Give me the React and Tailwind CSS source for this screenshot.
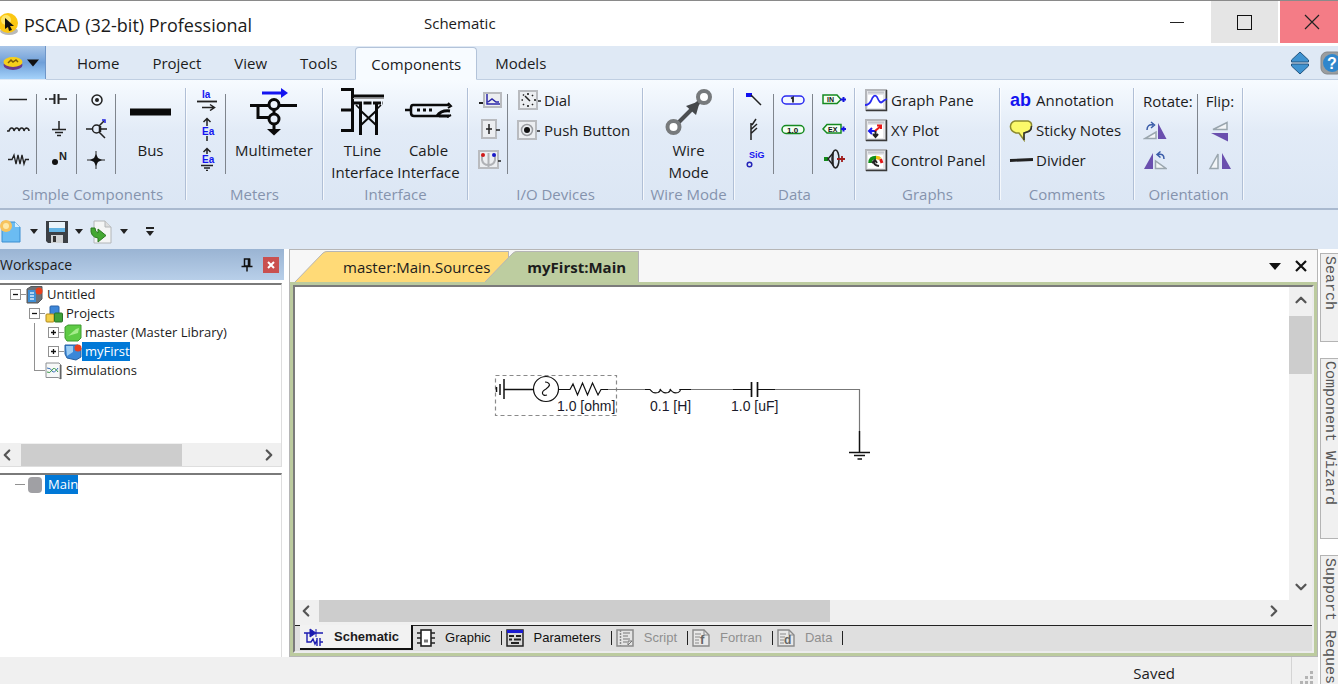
import { ChevronDown, ChevronLeft, ChevronRight, ChevronUp } from "lucide-react";

const menuTabs = ["Home", "Project", "View", "Tools", "Components", "Models"];

const sheets = [
  { label: "Graphic", icon: GraphicIcon },
  { label: "Parameters", icon: ParametersIcon },
  { label: "Script", icon: ScriptIcon, disabled: true },
  { label: "Fortran", icon: FortranIcon, disabled: true },
  { label: "Data", icon: DataIcon, disabled: true },
];

/* ---------- Small ribbon icons (24 x 24) ---------- */

function Icon({ children, className = "h-6 w-6", box = "0 0 24 24" }) {
  return (
    <svg
      viewBox={box}
      className={`shrink-0 ${className}`}
      fill="none"
      stroke="#222"
      strokeWidth="1.5"
      aria-hidden="true"
    >
      {children}
    </svg>
  );
}

function Glyph({ x, y, size = 9, fill = "#1414f0", children }) {
  return (
    <text
      x={x}
      y={y}
      fontSize={size}
      fill={fill}
      stroke="none"
      fontWeight="bold"
      fontFamily="'Liberation Sans', Arial, sans-serif"
    >
      {children}
    </text>
  );
}

const WireIcon = () => (
  <Icon><path d="M3 12.5H21" /></Icon>
);
const InductorIcon = () => (
  <Icon><path d="M1 14H3Q4 10.500 6 11Q8 11.500 8 14Q9 10.500 11 11Q13 11.500 13 14Q14 10.500 16 11Q18 11.500 18 14Q19 11 20.500 11Q23 11.500 23 14" /></Icon>
);
const ResistorIcon = () => (
  <Icon><path d="M2 12.500H6L8 8L10 17L12 8L14 17L16 8L18 17L19.500 12.500H23" strokeWidth="1.300" /></Icon>
);
const CapacitorIcon = () => (
  <Icon><path d="M0 12H2M4 12H9M14 12H22" /><path d="M9.500 7V17M13.500 7V17" strokeWidth="2" /></Icon>
);
const GroundIcon = () => (
  <Icon><path d="M14 4V12M7 12.500H21M10 15.500H18M12 18.500H16" /></Icon>
);
const NodeIcon = () => (
  <Icon><circle cx="10" cy="15" r="3" fill="#111" stroke="none" /><Glyph x="14" y="13" size="11" fill="#222">N</Glyph></Icon>
);
const TerminalIcon = () => (
  <Icon><circle cx="13" cy="13" r="5" /><circle cx="13" cy="13" r="2" fill="#222" stroke="none" /></Icon>
);
const BranchIcon = () => (
  <Icon>
    <path d="M2 12H8M15 9L20 4M15 12H23M15 15L21 21" />
    <circle cx="12.500" cy="12" r="4" />
    <path d="M16 9V15" strokeWidth="2.500" />
    <path d="M18 3H21V6" stroke="#2222dd" />
  </Icon>
);
const StarIcon = () => (
  <Icon><path d="M3 13H21M12 4V22" strokeWidth="1" /><path d="M12 7L14 11L18 13L14 15L12 19L10 15L6 13L10 11Z" fill="#111" stroke="none" /></Icon>
);

const AmmeterIcon = () => (
  <Icon><Glyph x="8" y="11" size="10">Ia</Glyph><path d="M3 14.500H23" strokeWidth="1.800" /><path d="M8 20.500H20M16 17.500L20.500 20.500L16 23.500" /></Icon>
);
const VoltmeterIcon = () => (
  <Icon><path d="M13 9V2M9.500 5L13 1.500L16.500 5M13 19V24" /><Glyph x="8" y="18" size="10">Ea</Glyph></Icon>
);
const VoltmeterGndIcon = () => (
  <Icon><path d="M13 7V2M9.500 5L13 1.500L16.500 5M7 18.500H19M10 21H16M12 23.500H14" /><Glyph x="8" y="16" size="10">Ea</Glyph></Icon>
);

const Tile = ({ x = 3, y = 3, w = 18, h = 18 }) => (
  <rect x={x} y={y} width={w} height={h} fill="#eceef1" stroke="#b9bbbf" strokeWidth="2" />
);

const OutputChannelIcon = () => (
  <Icon>
    <Tile x="6" y="6" w="17" h="14" />
    <path d="M1 16H5" strokeWidth="2" />
    <path d="M9 7V17H22M10 15L14 12L18 15H21" stroke="#2a26a8" />
  </Icon>
);
const SliderIcon = () => (
  <Icon><Tile x="4" y="3" w="14" h="18" /><path d="M11 7V17M8 12H14M18 13H22" /></Icon>
);
const SwitchIcon = () => (
  <Icon>
    <Tile x="1" y="4" w="19" h="17" />
    <path d="M4 8V13Q5 18 10.500 18Q16 18 17 13V8M10.500 6V20" stroke="#b0b2b6" strokeWidth="2" />
    <circle cx="5" cy="8" r="2" fill="#d01818" stroke="none" />
    <circle cx="16" cy="8" r="2" fill="#1818c8" stroke="none" />
    <path d="M20 14H23" />
  </Icon>
);
const DialIcon = () => (
  <Icon>
    <Tile x="2" y="3" />
    <path d="M8 8L13 13" />
    <path d="M11 5V7M16 7L15 8M18 11V13M16 17L15 16M11 17V19M6 17L7 16M4.500 12H6M6 6.500L7 7.500" strokeWidth="1.600" />
    <path d="M21 13H24" />
  </Icon>
);
const PushButtonIcon = () => (
  <Icon>
    <Tile x="1" y="3" />
    <circle cx="10" cy="12" r="5.500" stroke="#9a9ca0" />
    <circle cx="10" cy="12" r="3" fill="#111" stroke="none" />
    <path d="M20 13H23" />
  </Icon>
);

const DataLabelIcon = () => (
  <Icon><rect x="4" y="6" width="6" height="4" fill="#1010f0" stroke="none" /><path d="M9 8L19 18" /></Icon>
);
const TapIcon = () => (
  <Icon><path d="M9 6V23M10 8L14 2M9.500 12L15 7M9.500 16L15 11" /></Icon>
);
const SignalIcon = () => (
  <Icon><Glyph x="7" y="11" size="9">SiG</Glyph><circle cx="7.500" cy="17.500" r="2.300" stroke="#2424b8" /></Icon>
);
const IntegerIcon = () => (
  <Icon><rect x="1" y="9" width="22" height="8" rx="4" stroke="#2a2af0" fill="#f4f8ff" /><path d="M10 11.500L12 10.500V15.500" strokeWidth="1.800" /></Icon>
);
const RealIcon = () => (
  <Icon><rect x="1" y="8.500" width="22" height="8" rx="4" stroke="#158a20" fill="#f4fff4" /><Glyph x="6" y="15.500" size="8" fill="#111">1.0</Glyph></Icon>
);
const ImportTagIcon = () => (
  <Icon>
    <path d="M1 8H15L19 12.500L15 16.500H1Z" stroke="#158a20" fill="#f4fff4" />
    <Glyph x="5" y="15" size="7" fill="#111">IN</Glyph>
    <path d="M18 12.500H24M21.500 10V15" stroke="#1414e0" strokeWidth="2" />
  </Icon>
);
const ExportTagIcon = () => (
  <Icon>
    <path d="M5 7.500H19V16H5L1 12Z" stroke="#158a20" fill="#f4fff4" />
    <Glyph x="6" y="14.500" size="7" fill="#111">EX</Glyph>
    <path d="M19 12H24M21.500 9.500V14.500" stroke="#1414e0" strokeWidth="2" />
  </Icon>
);
const RadioLinkIcon = () => (
  <Icon>
    <path d="M2 12H6" stroke="#118a18" strokeWidth="4" />
    <path d="M6 12L11 6V18Z" />
    <ellipse cx="13.500" cy="12" rx="3.500" ry="9" />
    <path d="M15 12H23M20 9V15" stroke="#a01c1c" strokeWidth="1.800" />
  </Icon>
);

const PaneFrame = ({ children }) => (
  <Icon>
    <rect x="2" y="2" width="20" height="20" fill="#e6e7ea" stroke="#b4b6ba" strokeWidth="2" />
    <rect x="4" y="7" width="15" height="13" fill="#fff" stroke="none" />
    <path d="M22.500 2V22.500H2" stroke="#3a3a3a" />
    <path d="M4 4.500H20" stroke="#c4c6cc" strokeWidth="2" />
    {children}
  </Icon>
);
const GraphPaneIcon = () => (
  <PaneFrame><path d="M1 17Q5 17 7 13Q10 5 13 9Q16 16 18 14Q20 12 23 11" stroke="#2a2af0" strokeWidth="1.800" /></PaneFrame>
);
const XYPlotIcon = () => (
  <PaneFrame>
    <path d="M5 13H11M8 10L5 13L8 16" stroke="#1a1af0" strokeWidth="2" />
    <path d="M11 13L17 8M13 7.500H17V11" stroke="#e81818" strokeWidth="2" />
    <path d="M11.500 13V19M9 16L11.500 19L14 16" strokeWidth="2" />
  </PaneFrame>
);
const ControlPanelIcon = () => (
  <PaneFrame>
    <path d="M6 15Q6 9.500 12 9.500" stroke="#109018" strokeWidth="3.500" />
    <path d="M12 9.500Q15 9.500 16 11" stroke="#f0c010" strokeWidth="3.500" />
    <path d="M16.500 11L18 15" stroke="#e01818" strokeWidth="3" />
    <path d="M15 18Q9 17 10 13M8 15L11 12L13 15" strokeWidth="2" />
  </PaneFrame>
);

const AnnotationIcon = () => (
  <Icon><Glyph x="1" y="18" size="18">ab</Glyph></Icon>
);
const StickyIcon = () => (
  <Icon>
    <path d="M6 3H19Q23 4 22.500 8Q22.500 13 18 14L15 15V22L10 15H7Q1 13 1.500 8Q2 4 6 3Z" fill="#fbf96a" stroke="#8c8a30" />
    <path d="M22.500 8Q22.500 13 18 14L15 15V22" stroke="#333" />
  </Icon>
);
const DividerIcon = () => (
  <Icon><path d="M1 12.500L24 11.500" strokeWidth="2.800" /></Icon>
);

const PURPLE = "#6a4fae";
const RotateRightIcon = () => (
  <Icon>
    <path d="M15 4V20H23.500Z" fill={PURPLE} stroke="none" />
    <path d="M2 19.500H13V13Z" fill="#f2f5f7" stroke="#9aa6ae" />
    <path d="M4 11Q4 5 10 6M8 3L11.500 6L8 9" stroke="#3a5ca8" />
  </Icon>
);
const RotateLeftIcon = () => (
  <Icon>
    <path d="M10 4V20H1Z" fill={PURPLE} stroke="none" />
    <path d="M12.500 12V19.500H23Z" fill="#f2f5f7" stroke="#9aa6ae" />
    <path d="M21 10Q21 4 15 5.500M17.500 2.500L14 5.500L17.500 8.500" stroke="#3a5ca8" />
  </Icon>
);
const FlipVerticalIcon = () => (
  <Icon>
    <path d="M19 3.500V10.500H5Z" fill="#f2f5f7" stroke="#9aa6ae" />
    <path d="M3 14H20V22.500Z" fill={PURPLE} stroke="none" />
  </Icon>
);
const FlipHorizontalIcon = () => (
  <Icon>
    <path d="M10 5V19.500H2Z" fill="#f2f5f7" stroke="#9aa6ae" />
    <path d="M14 4V20H23Z" fill={PURPLE} stroke="none" />
  </Icon>
);

/* ---------- Large ribbon icons (48 x 48) ---------- */

function BigIcon({ children }) {
  return (
    <svg viewBox="0 0 48 48" className="mt-1 mb-[3px] h-12 w-12 shrink-0" fill="none" stroke="#0a0a0a" strokeWidth="3" aria-hidden="true">
      {children}
    </svg>
  );
}

const BusIcon = () => (
  <BigIcon><path d="M3 24H44" strokeWidth="7" /></BigIcon>
);
const MultimeterIcon = () => (
  <BigIcon>
    <path d="M12 5H33" stroke="#1414f0" />
    <path d="M31 0L38 5L31 10Z" fill="#1414f0" stroke="none" />
    <path d="M0 17.500H47M8 17V29.500H19" />
    <path d="M24 22V43" />
    <circle cx="24" cy="16.500" r="5" fill="#eef4fc" />
    <circle cx="24" cy="31" r="5" fill="#e6eef9" />
    <path d="M17 41H31L24 47.500Z" fill="#0a0a0a" stroke="none" />
  </BigIcon>
);
const TLineIcon = () => (
  <BigIcon>
    <path d="M2 1.500H13.500V42.500H2M2 22H13M13 8H45" />
    <path d="M15 15H44" strokeDasharray="8 1.500" />
    <path d="M21.500 15V47M37.500 15V47" />
    <path d="M22 23L37 37M37 23L22 37" strokeWidth="2" />
    <path d="M17 17L21 21M42 17L38 21" strokeWidth="1.600" />
    <path d="M14 10.500H45" stroke="#999" strokeWidth="1" />
  </BigIcon>
);
const CableIcon = () => (
  <BigIcon>
    <path d="M0 22H6M44 17H8Q6 17 6 20V25Q6 28 9 28H34" strokeWidth="2.500" />
    <path d="M32 28Q36 22 45 23M34 28H44" strokeWidth="3" />
    <path d="M12 22H15M18 22H21M24 22H27" />
    <path d="M43 15L46 18L43 20M42 29L46 27" strokeWidth="2" />
  </BigIcon>
);
const WireModeIcon = () => (
  <BigIcon>
    <path d="M13 35L35 13" stroke="#4c4f52" strokeWidth="4" />
    <path d="M35 13L21 18L31 27Z" fill="#45484b" stroke="none" />
    <circle cx="8.500" cy="39" r="6" fill="#fff" stroke="#777a7c" strokeWidth="4" />
    <circle cx="39" cy="9" r="6" fill="#fff" stroke="#777a7c" strokeWidth="4" />
  </BigIcon>
);

/* ---------- Ribbon building blocks ---------- */

function Group({ label, className, children }) {
  return (
    <section className={`flex shrink-0 flex-col pt-1 ${className}`} aria-label={label}>
      <div className="flex h-[100px]">{children}</div>
      <div className="whitespace-nowrap text-center leading-5 text-[#8593ad]">{label}</div>
    </section>
  );
}

const GroupEdge = () => <div className="my-2 w-0.5 shrink-0 border-l border-[#b0bfd6] bg-white/70" />;
const Rule = () => <div className="mt-[10px] h-20 w-px shrink-0 bg-[#7f858d]" />;

function IconColumn({ icons, className }) {
  return (
    <div className={`flex shrink-0 flex-col items-center ${className}`}>
      {icons.map(([name, Glyphic]) => (
        <button key={name} type="button" aria-label={name} className="flex h-[30px] items-center">
          <Glyphic />
        </button>
      ))}
    </div>
  );
}

function TextColumn({ items, className }) {
  return (
    <div className={`flex flex-col items-start ${className}`}>
      {items.map(([label, Glyphic]) => (
        <button key={label} type="button" className="flex h-[30px] items-center gap-[3px] whitespace-nowrap pt-0.5">
          <Glyphic />
          {label}
        </button>
      ))}
    </div>
  );
}

function BigButton({ icon: Glyphic, lines, className }) {
  return (
    <button type="button" className={`flex flex-col items-center justify-start leading-[22px] ${className}`}>
      <Glyphic />
      {lines.map((line) => (
        <span key={line} className="whitespace-nowrap">{line}</span>
      ))}
    </button>
  );
}

function Ribbon() {
  return (
    <div className="flex h-[130px] overflow-hidden border-b-2 border-[#a9b9cf] bg-gradient-to-b from-[#f7fbff] via-[#e2ebf7] via-40% to-[#dbe6f4]">
      <Group label="Simple Components" className="w-[185px]">
        <IconColumn className="w-9" icons={[["Wire", WireIcon], ["Inductor", InductorIcon], ["Resistor", ResistorIcon]]} />
        <Rule />
        <IconColumn className="w-[39px]" icons={[["Capacitor", CapacitorIcon], ["Ground", GroundIcon], ["Node label", NodeIcon]]} />
        <Rule />
        <IconColumn className="w-[38px]" icons={[["Terminal", TerminalIcon], ["Breakout", BranchIcon], ["Pin", StarIcon]]} />
        <Rule />
        <BigButton className="flex-1" icon={BusIcon} lines={["Bus"]} />
      </Group>
      <GroupEdge />
      <Group label="Meters" className="w-[135px]">
        <IconColumn className="w-[38px]" icons={[["Ammeter", AmmeterIcon], ["Voltmeter", VoltmeterIcon], ["Ground voltmeter", VoltmeterGndIcon]]} />
        <Rule />
        <BigButton className="flex-1" icon={MultimeterIcon} lines={["Multimeter"]} />
      </Group>
      <GroupEdge />
      <Group label="Interface" className="w-[143px]">
        <div className="flex flex-1 justify-center">
          <BigButton className="w-[66px]" icon={TLineIcon} lines={["TLine", "Interface"]} />
          <BigButton className="w-[66px]" icon={CableIcon} lines={["Cable", "Interface"]} />
        </div>
      </Group>
      <GroupEdge />
      <Group label="I/O Devices" className="w-[173px]">
        <IconColumn className="w-[38px] pl-1" icons={[["Output channel", OutputChannelIcon], ["Slider", SliderIcon], ["Switch", SwitchIcon]]} />
        <Rule />
        <TextColumn className="pl-[9px]" items={[["Dial", DialIcon], ["Push Button", PushButtonIcon]]} />
      </Group>
      <GroupEdge />
      <Group label="Wire Mode" className="w-[89px]">
        <BigButton className="flex-1" icon={WireModeIcon} lines={["Wire", "Mode"]} />
      </Group>
      <GroupEdge />
      <Group label="Data" className="w-[119px]">
        <IconColumn className="w-[38px]" icons={[["Data label", DataLabelIcon], ["Data tap", TapIcon], ["Signal", SignalIcon]]} />
        <Rule />
        <IconColumn className="w-[38px]" icons={[["Integer", IntegerIcon], ["Real", RealIcon]]} />
        <Rule />
        <IconColumn className="flex-1" icons={[["Import", ImportTagIcon], ["Export", ExportTagIcon], ["Radio link", RadioLinkIcon]]} />
      </Group>
      <GroupEdge />
      <Group label="Graphs" className="w-[143px]">
        <TextColumn className="pl-2" items={[["Graph Pane", GraphPaneIcon], ["XY Plot", XYPlotIcon], ["Control Panel", ControlPanelIcon]]} />
      </Group>
      <GroupEdge />
      <Group label="Comments" className="w-[132px]">
        <TextColumn className="pl-2" items={[["Annotation", AnnotationIcon], ["Sticky Notes", StickyIcon], ["Divider", DividerIcon]]} />
      </Group>
      <GroupEdge />
      <Group label="Orientation" className="w-[107px]">
        <div className="flex w-[62px] flex-col items-start pl-2">
          <span className="h-8 pt-[6px]">Rotate:</span>
          <button type="button" aria-label="Rotate right" className="flex h-[30px] items-center"><RotateRightIcon /></button>
          <button type="button" aria-label="Rotate left" className="flex h-[30px] items-center"><RotateLeftIcon /></button>
        </div>
        <Rule />
        <div className="flex flex-1 flex-col items-center">
          <span className="h-8 pt-[6px]">Flip:</span>
          <button type="button" aria-label="Flip vertical" className="flex h-[30px] items-center"><FlipVerticalIcon /></button>
          <button type="button" aria-label="Flip horizontal" className="flex h-[30px] items-center"><FlipHorizontalIcon /></button>
        </div>
      </Group>
      <GroupEdge />
    </div>
  );
}

/* ---------- Window chrome ---------- */

function TitleBar() {
  return (
    <header className="flex h-[46px] shrink-0 items-center border-t border-[#8a8a8a] bg-white text-[#1b1b1b]">
      <svg viewBox="3 0 19 24" className="h-6 w-[19px] shrink-0" aria-hidden="true">
        <ellipse cx="12" cy="19" rx="9" ry="4" fill="#b9b9b9" />
        <circle cx="11" cy="11" r="10" fill="#fbc712" />
        <circle cx="9" cy="8" r="5" fill="#fde56a" />
        <path d="M8 6L17 14H13L15 18L12 19L11 15L8 17Z" fill="#111" />
      </svg>
      <div className="flex flex-1 items-center pl-[5px]">
        <h1 className="w-[400px] whitespace-nowrap pt-[3px] text-[18px]">PSCAD (32-bit) Professional</h1>
        <span className="text-[15px]">Schematic</span>
      </div>
      <button type="button" aria-label="Minimize" className="flex h-full w-[69px] items-center justify-center pb-0.5">
        <span className="h-px w-3.5 bg-[#222]" />
      </button>
      <button type="button" aria-label="Maximize" className="mr-0.5 flex h-[42px] w-[67px] items-center justify-center self-start bg-[#e5e5e5]">
        <span className="h-[15px] w-[15px] border border-[#111]" />
      </button>
      <button type="button" aria-label="Close" className="flex h-[42px] w-[58px] items-center justify-center self-start bg-[#f47c86] pl-1.5">
        <svg viewBox="0 0 16 16" className="h-4 w-4" stroke="#222" strokeWidth="1.200"><path d="M1 1L15 15M15 1L1 15" /></svg>
      </button>
    </header>
  );
}

function MenuTabs() {
  return (
    <nav className="flex h-[34px] shrink-0 bg-[#dfe9f5]">
      <button type="button" aria-label="Application menu" className="flex h-[33px] w-[46px] items-center gap-1 border-r border-[#6f96c8] bg-gradient-to-b from-[#a9c6e8] via-[#6f9fd8] to-[#a5d2fa] pl-[3px]">
        <svg viewBox="0 0 20 14" className="h-3.5 w-5">
          <ellipse cx="10" cy="9" rx="9.500" ry="5" fill="#6b3a8c" />
          <ellipse cx="10" cy="6" rx="9.500" ry="5" fill="#f6cf1b" />
          <path d="M5 7L8 4L10 6L13 4L15 6" stroke="#7a5a08" strokeWidth="1.500" fill="none" />
        </svg>
        <svg viewBox="0 0 14 8" className="h-2 w-3"><path d="M0 0H14L7 8Z" fill="#111" /></svg>
      </button>
      <div className="flex flex-1 items-end gap-[3px] border-b border-[#c0cfe2] pl-4">
        {menuTabs.map((tab) => (
          <button
            key={tab}
            type="button"
            className={`h-[33px] whitespace-nowrap rounded-t border pt-px ${
              tab === "Components"
                ? "-mb-px border-[#b3c3d9] border-b-[#f7fbff] bg-[#f7fbff] px-[15px]"
                : "border-transparent px-3.5"
            }`}
          >
            {tab}
          </button>
        ))}
      </div>
      <div className="flex items-center gap-2.5 border-b border-[#c0cfe2]">
        <button type="button" aria-label="Toggle ribbon">
          <svg viewBox="0 0 20 24" className="h-6 w-5" stroke="#24557f">
            <path d="M10 1L18.500 9V11H1.500V9Z" fill="#3f93d0" />
            <path d="M10 23L18.500 15V13H1.500V15Z" fill="#3f93d0" />
          </svg>
        </button>
        <button type="button" aria-label="Help">
          <svg viewBox="0 0 18 24" className="h-6 w-[18px]">
            <rect x="1" y="1" width="22" height="22" rx="6" fill="#9a9d9f" stroke="#84888b" />
            <circle cx="12" cy="12" r="9" fill="#2f86cc" />
            <text x="7" y="18" fontSize="16" fontWeight="bold" fill="#fff" fontFamily="'Liberation Sans', Arial, sans-serif">?</text>
          </svg>
        </button>
      </div>
    </nav>
  );
}

const Caret = () => (
  <svg viewBox="0 0 8 5" className="h-[5px] w-2 shrink-0"><path d="M0 0H8L4 5Z" fill="#222" /></svg>
);

function QuickAccess() {
  return (
    <div className="flex h-[39px] shrink-0 items-center bg-[#dfe9f5] pt-1">
      <button type="button" aria-label="New" className="flex items-center gap-2">
        <svg viewBox="0 0 22 24" className="h-6 w-[22px]">
          <path d="M2 2H15L20 7V22H2Z" fill="#6bbcf2" stroke="#3b8fd2" />
          <path d="M15 2V7H20Z" fill="#d6edfc" />
          <circle cx="6" cy="6" r="6" fill="#f7c35c" />
          <circle cx="6" cy="6" r="3" fill="#fde9a8" />
        </svg>
        <Caret />
      </button>
      <button type="button" aria-label="Save" className="ml-[7px] flex items-center gap-1.5">
        <svg viewBox="0 0 24 24" className="h-6 w-6">
          <path d="M1 1H23V23H3L1 21Z" fill="#3b3f44" />
          <rect x="4" y="2" width="16" height="10" fill="#e9f4fb" />
          <rect x="4" y="8" width="16" height="4" fill="#62b3e3" />
          <rect x="6" y="15" width="12" height="8" fill="#cfd2d4" />
          <rect x="8" y="16" width="3" height="6" fill="#333" />
        </svg>
        <Caret />
      </button>
      <button type="button" aria-label="Import" className="ml-[7px] flex items-center gap-2">
        <svg viewBox="0 0 22 24" className="h-6 w-[22px]">
          <path d="M4 1H15L21 7V23H4Z" fill="#f4f5f5" stroke="#b3b6b8" />
          <path d="M15 1V7H21" fill="#ddd" stroke="#b3b6b8" />
          <path d="M1 8Q0 17 8 18V22L16 15.500L8 9V13Q5 12 5 8Z" fill="#44a832" stroke="#2c7a20" />
        </svg>
        <Caret />
      </button>
      <button type="button" aria-label="Customize toolbar" className="ml-[18px] flex flex-col items-center gap-0.5">
        <span className="h-0.5 w-2 bg-[#222]" />
        <Caret />
      </button>
    </div>
  );
}

/* ---------- Workspace panel ---------- */

const SessionIcon = () => (
  <Icon className="h-[18px] w-[18px]" box="0 0 18 18">
    <path d="M1 3L5 0.500H16V13L12 17H1Z" fill="#6c7177" stroke="#54585c" strokeWidth="1" />
    <rect x="2" y="4" width="8" height="12" fill="#3f8fd6" stroke="none" />
    <path d="M4 7H8M4 10H8M4 13H8" stroke="#d7ecfb" />
    <circle cx="13" cy="5" r="3.500" fill="#e8401c" stroke="none" />
  </Icon>
);
const ProjectsIcon = () => (
  <Icon className="h-[18px] w-[18px]" box="0 0 18 18">
    <rect x="5" y="1" width="9" height="9" rx="1" fill="#3d86d8" stroke="#2a62a8" strokeWidth="1" />
    <rect x="1" y="9" width="8" height="8" rx="1" fill="#f3cf4a" stroke="#b18a1c" strokeWidth="1" />
    <rect x="9.500" y="8" width="8" height="9" rx="1" fill="#3ea13a" stroke="#2a7428" strokeWidth="1" />
  </Icon>
);
const LibraryIcon = () => (
  <Icon className="h-[18px] w-[18px]" box="0 0 18 18">
    <path d="M1 3L4 1H17V14L14 17H3L1 14Z" fill="#5ecb45" stroke="#3f9a30" strokeWidth="1" />
    <path d="M4 12L12 5L15 4L14 9Z" fill="#a6ec8c" stroke="none" />
  </Icon>
);
const CaseIcon = () => (
  <Icon className="h-[18px] w-[18px]" box="0 0 18 18">
    <path d="M1 2H14L17 5V14L12 17L3 15L1 11Z" fill="#3a87d8" stroke="#28609f" strokeWidth="1" />
    <path d="M2 3H9V9L3 13Z" fill="#9ccdf4" stroke="none" />
    <circle cx="14" cy="5" r="3.500" fill="#e8401c" stroke="none" />
  </Icon>
);
const SimulationIcon = () => (
  <Icon className="h-[18px] w-[18px]" box="0 0 18 18">
    <path d="M1 1H14L16 3V17L13 15.500H1Z" fill="#f7f8f8" stroke="#8c8f92" strokeWidth="1" />
    <path d="M15.500 3V17" stroke="#666" />
    <path d="M2 6Q6 6 7 9Q9 12 13 6" stroke="#3a6fb8" strokeWidth="1" />
    <path d="M2 10Q5 12 7 8T13 10" stroke="#3a9a48" strokeWidth="1" />
  </Icon>
);

function Expander({ open }) {
  return (
    <span className="flex items-center">
      <svg viewBox="0 0 11 11" className="h-[11px] w-[11px]" fill="none">
        <rect x="0.500" y="0.500" width="10" height="10" fill="#fff" stroke="#919191" />
        <path d={open ? "M3 5.500H8" : "M3 5.500H8M5.500 3V8"} stroke="#111" strokeWidth="1.300" />
      </svg>
      <span className="h-px w-[5px] bg-[#919191]" />
    </span>
  );
}

function TreeRow({ icon: Glyphic, label, selected, children }) {
  return (
    <li className="flex h-[19px] items-center whitespace-nowrap">
      {children}
      <Glyphic />
      <span className={`h-[19px] pl-[3px] leading-[18px] ${selected ? "bg-[#0078d7] text-white" : ""}`}>{label}</span>
    </li>
  );
}

const Guide = () => <span className="ml-[34px] w-3.5 self-stretch border-l border-[#919191]" />;

function Workspace() {
  return (
    <aside className="flex w-[284px] shrink-0 flex-col text-[13px]">
      <div className="flex h-[31px] shrink-0 items-center bg-gradient-to-b from-[#9ab4d3] to-[#b8cfe9] pr-[5px]">
        <h2 className="flex-1 text-[14px]">Workspace</h2>
        <button type="button" aria-label="Pin" className="mr-2.5">
          <svg viewBox="0 0 12 14" className="h-3.5 w-3" stroke="#111" strokeWidth="1.500" fill="none">
            <path d="M3.500 1H8.500V8H3.500ZM0.500 8.500H11.500M6 9V13.500" />
            <path d="M8 1V8" strokeWidth="2.500" />
          </svg>
        </button>
        <button type="button" aria-label="Close workspace" className="flex h-4 w-4 items-center justify-center bg-[#c9504f]">
          <svg viewBox="0 0 8 8" className="h-2 w-2" stroke="#fff" strokeWidth="2"><path d="M1 1L7 7M7 1L1 7" /></svg>
        </button>
      </div>

      <div className="mt-[3px] mr-0.5 flex h-[184px] shrink-0 flex-col border-t-2 border-r border-b border-t-[#7a7a7a] border-r-[#dedede] border-b-[#dedede]">
        <ul className="flex-1">
          <TreeRow icon={SessionIcon} label="Untitled">
            <span className="ml-2.5"><Expander open /></span>
          </TreeRow>
          <TreeRow icon={ProjectsIcon} label="Projects">
            <span className="ml-[29px]"><Expander open /></span>
          </TreeRow>
          <TreeRow icon={LibraryIcon} label="master (Master Library)">
            <Guide />
            <Expander />
          </TreeRow>
          <TreeRow icon={CaseIcon} label="myFirst" selected>
            <Guide />
            <Expander />
          </TreeRow>
          <TreeRow icon={SimulationIcon} label="Simulations">
            <span className="ml-[34px] h-2.5 w-[11px] self-start border-b border-l border-[#919191]" />
          </TreeRow>
        </ul>
        <div className="flex h-[23px] items-center bg-[#f0f0f0]">
          <button type="button" aria-label="Scroll left" className="w-[21px]"><ChevronLeft className="-ml-0.5 h-[18px] w-[18px] text-[#555]" strokeWidth={3} /></button>
          <div className="h-[22px] flex-1"><div className="h-full w-[68%] bg-[#cdcdcd]" /></div>
          <button type="button" aria-label="Scroll right" className="w-[23px] pl-0.5"><ChevronRight className="h-[18px] w-[18px] text-[#555]" strokeWidth={3} /></button>
        </div>
      </div>

      <div className="mt-1.5 mr-0.5 flex-1 border-t-2 border-r border-t-[#7a7a7a] border-r-[#dedede]">
        <div className="flex h-[19px] items-center">
          <span className="ml-[15px] h-px w-2.5 bg-[#919191]" />
          <span className="ml-[3px] h-4 w-3.5 rounded-sm bg-[#a0a0a4]" />
          <span className="ml-[3px] h-[19px] bg-[#0078d7] pl-[3px] leading-[18px] text-white">Main</span>
        </div>
      </div>
    </aside>
  );
}

/* ---------- Schematic editor ---------- */

function Circuit() {
  return (
    <svg viewBox="0 0 600 200" width="600" height="200" fill="none" stroke="#111" strokeWidth="1.200" role="img" aria-label="RLC circuit">
      <rect x="200.500" y="88.500" width="121" height="40" stroke="#8a8a8a" strokeDasharray="4 3" />
      {/* source with its ground */}
      <path d="M209 92V112M205 97V108M201.500 100V105M209 102.500H238" strokeWidth="1.500" />
      <circle cx="251" cy="102" r="12.500" />
      <path d="M250 95Q254 95 254.500 98Q254 100 251 102Q247 104 247.500 106.500Q248 109 252 108" />
      <path d="M264 102.500H275L278 97L282.500 108L287.500 96L292.500 108L297.500 96L303 108L306 102.500H313" />
      <path d="M313 102.500H355M395 102.500H438M475 102.500H564.500V144" stroke="#777" />
      <path d="M350 102.500H355Q358 107 363 105.500Q366 104 365 102Q368 107 373 105.500Q376 104 375 102Q378 107 383 105.500Q386 104 385 102.500H396" />
      <path d="M438 102.500H456M463 102.500H480" />
      <path d="M456.500 95V110M462.500 95V110" strokeWidth="1.700" />
      <path d="M564.500 144V165M554 165.500H575M559 168.500H570M562.500 172H567" strokeWidth="1.500" />
      <g fill="#1a1a2a" stroke="none" fontSize="14" fontFamily="'Liberation Sans', Arial, sans-serif">
        <text x="262" y="124">1.0 [ohm]</text>
        <text x="355" y="124">0.1 [H]</text>
        <text x="436" y="124">1.0 [uF]</text>
      </g>
    </svg>
  );
}

function DocTab({ label, fill, bodyClass, className = "" }) {
  return (
    <button type="button" className={`flex h-[31px] shrink-0 ${className}`}>
      <svg viewBox="0 0 32 31" className="h-[31px] w-8" fill="none">
        <path d="M0 31L28 2Q30 0 32 0V31Z" fill={fill} />
        <path d="M0 31L28 2Q30 0.500 32 0.500" stroke="#b5b5b5" />
      </svg>
      <span className={`h-[31px] border-t border-r border-[#b5b5b5] text-[15px] leading-[31px] ${bodyClass}`}>{label}</span>
    </button>
  );
}

function GraphicIcon() {
  return (
    <Icon className="h-[18px] w-[18px]" box="0 0 18 18">
      <rect x="4" y="1" width="10" height="16" fill="#fff" strokeWidth="1.600" />
      <path d="M0 4H4M0 9H4M0 14H4M14 4H18M14 9H18M14 14H18" />
      <path d="M7 12H11" stroke="#777" strokeWidth="3" />
    </Icon>
  );
}
function ParametersIcon() {
  return (
    <Icon className="h-[18px] w-[18px]" box="0 0 18 18">
      <rect x="1" y="1" width="16" height="16" fill="#d8d8d8" />
      <path d="M1 2.500H17" stroke="#1a1ad0" strokeWidth="3" />
      <path d="M3 7H8M10 7H15M3 10.500H6M8 10.500H15M5 14H13" strokeWidth="2" />
    </Icon>
  );
}
function PageIcon({ children }) {
  return (
    <Icon className="h-[18px] w-[18px]" box="0 0 18 18">
      <path d="M1 1H12L17 6V17H1Z" fill="#e8e8e8" stroke="#8a8a8a" strokeWidth="1.400" />
      <path d="M12 1V6H17M3 5H9M3 8H8M3 11H7M3 14H7" stroke="#8a8a8a" strokeWidth="1" />
      {children}
    </Icon>
  );
}
function ScriptIcon() {
  return (
    <Icon className="h-[18px] w-[18px]" box="0 0 18 18">
      <rect x="1" y="1" width="16" height="16" fill="#e4e4e4" stroke="#8a8a8a" />
      <path d="M4.500 1V17" stroke="#8a8a8a" strokeDasharray="2 1" />
      <path d="M7 4H14M7 7H12M7 10H14M7 13H11M12 16L16 12M12 16V12H16" stroke="#777" strokeWidth="1" />
    </Icon>
  );
}
function FortranIcon() {
  return <PageIcon><Glyph x="8" y="15" size="13" fill="#666">f</Glyph></PageIcon>;
}
function DataIcon() {
  return <PageIcon><Glyph x="7" y="15" size="12" fill="#666">d</Glyph></PageIcon>;
}

function SheetTabs() {
  return (
    <div className="flex h-[26px] shrink-0 border-t border-[#222] bg-[#dfdfdf] pl-[5px] font-['Liberation_Sans',Arial,sans-serif] text-[13px]">
      <button type="button" className="-mt-px flex h-[25px] items-center gap-[11px] border-r-2 border-b-2 border-[#111] bg-[#f2f2f2] pl-1 pr-3 font-bold">
        <Icon className="h-[18px] w-[19px]" box="0 0 19 18">
          <path d="M0 5H6M12 5H19M3 5V14H7L9 11L11 16L13 12M13 10V18M16 10V18M16 14H19" stroke="#1c1cb0" strokeWidth="1.400" />
          <path d="M6 1L12 5L6 9ZM12 1V9" fill="#1c1cb0" stroke="#1c1cb0" strokeWidth="1" />
        </Icon>
        Schematic
      </button>
      {sheets.map(({ label, icon: Glyphic, disabled }) => (
        <button
          key={label}
          type="button"
          disabled={disabled}
          className={`flex h-6 items-center gap-2.5 pl-1 ${disabled ? "text-[#8f8f8f]" : "text-[#111]"}`}
        >
          <Glyphic />
          {label}
          <span className="h-3.5 w-px bg-[#222]" />
        </button>
      ))}
    </div>
  );
}

function Editor() {
  return (
    <main className="ml-[5px] flex min-w-0 flex-1 flex-col border border-[#b6b6b6]">
      <div className="flex h-8 shrink-0 items-end bg-[#f7f7f7] pl-[5px]">
        <DocTab label="master:Main.Sources" fill="#ffda77" bodyClass="bg-[#ffda77] pl-4 pr-[18px]" />
        <DocTab label="myFirst:Main" fill="#bdcda0" bodyClass="bg-[#bdcda0] pl-2.5 pr-3 font-bold" className="z-10 -ml-6" />
        <div className="flex h-full flex-1 items-center justify-end gap-3.5 pr-2.5">
          <button type="button" aria-label="Open documents">
            <svg viewBox="0 0 12 7" className="h-[7px] w-3"><path d="M0 0H12L6 7Z" fill="#111" /></svg>
          </button>
          <button type="button" aria-label="Close document">
            <svg viewBox="0 0 12 12" className="h-3 w-3" stroke="#111" strokeWidth="2.200"><path d="M1 1L11 11M11 1L1 11" /></svg>
          </button>
        </div>
      </div>
      <div className="flex flex-1 flex-col bg-[#bccb9f] p-[3px]">
        <div className="flex flex-1 flex-col border-2 border-t-[#7b7b7b] border-r-[#ececec] border-b-[#ececec] border-l-[#7b7b7b]">
          <div className="flex flex-1">
            <div className="min-w-0 flex-1 overflow-hidden bg-white"><Circuit /></div>
            <div className="flex w-[23px] flex-col items-center bg-[#f0f0f0]">
              <button type="button" aria-label="Scroll up" className="h-[29px] pb-1"><ChevronUp className="h-[18px] w-[18px] text-[#555]" strokeWidth={3} /></button>
              <div className="h-[58px] w-full bg-[#cdcdcd]" />
              <button type="button" aria-label="Scroll down" className="mt-auto h-[27px]"><ChevronDown className="h-[18px] w-[18px] text-[#555]" strokeWidth={3} /></button>
            </div>
          </div>
          <div className="flex h-[25px] shrink-0 bg-[#f0f0f0] pr-[23px]">
            <button type="button" aria-label="Scroll left" className="w-6 pb-1 pl-0.5"><ChevronLeft className="h-[18px] w-[18px] text-[#555]" strokeWidth={3} /></button>
            <div className="h-[22px] flex-1"><div className="h-full w-[54%] bg-[#cdcdcd]" /></div>
            <button type="button" aria-label="Scroll right" className="w-6 pb-1"><ChevronRight className="h-[18px] w-[18px] text-[#555]" strokeWidth={3} /></button>
          </div>
          <SheetTabs />
        </div>
      </div>
    </main>
  );
}

function SideTab({ label, className }) {
  return (
    <button
      type="button"
      className={`flex w-[18px] shrink-0 flex-col items-start border-t border-b border-l border-[#b4b4b4] bg-[#f0f0f0] pt-0.5 ${className}`}
    >
      <span className="whitespace-nowrap font-['Liberation_Mono','Courier_New',monospace] text-[15px] leading-[17px] text-[#555] [writing-mode:vertical-rl]">
        {label}
      </span>
    </button>
  );
}

export default function App() {
  return (
    <div className="flex h-screen flex-col overflow-hidden bg-white font-['Open_Sans','Noto_Sans',sans-serif] text-[15px] text-[#1c1c1c]">
      <TitleBar />
      <MenuTabs />
      <Ribbon />
      <QuickAccess />
      <div className="flex min-h-0 flex-1">
        <div className="flex min-w-0 flex-1 flex-col">
          <div className="flex min-h-0 flex-1">
            <Workspace />
            <Editor />
          </div>
          <footer className="flex h-[27px] shrink-0 items-center justify-end bg-[#f0f0f0]">
            <span className="pt-1.5">Saved</span>
            <span className="ml-[116px] h-full w-px bg-[#d4d4d4]" />
            <svg viewBox="0 0 14 14" className="ml-2 mr-1 h-3.5 w-3.5 self-end" fill="#b4b4b4">
              <path d="M10 1h3v3h-3zM5 6h3v3h-3zM10 6h3v3h-3zM0 11h3v3h-3zM5 11h3v3h-3zM10 11h3v3h-3z" />
            </svg>
          </footer>
        </div>
        <div className="ml-[2px] flex w-[18px] shrink-0 flex-col gap-4 overflow-hidden pt-1">
          <SideTab label="Search" className="h-[89px]" />
          <SideTab label="Component Wizard" className="h-[181px]" />
          <SideTab label="Support Request" className="h-[181px]" />
        </div>
      </div>
    </div>
  );
}
